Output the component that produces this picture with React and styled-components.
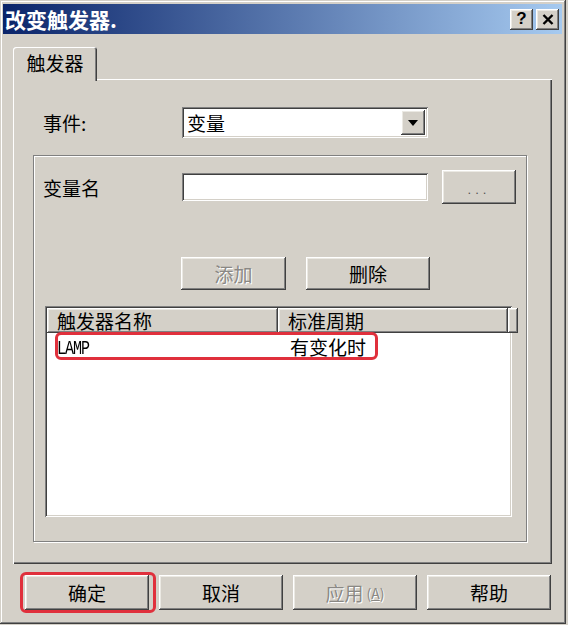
import React from "react";
import styled, { createGlobalStyle, css } from "styled-components";

const FACE = "#d4d0c8";
const CJK = `"Noto Sans CJK SC", "Liberation Sans", sans-serif`;

const raised = css`
  box-shadow: inset -1px -1px #404040, inset 1px 1px #ffffff,
    inset -2px -2px #808080, inset 2px 2px #ebe9e3;
`;

const sunken = css`
  box-shadow: inset 1px 1px #808080, inset -1px -1px #ffffff,
    inset 2px 2px #404040, inset -2px -2px #d4d0c8;
`;

const GlobalStyle = createGlobalStyle`
  html, body {
    margin: 0;
    background: ${FACE};
    font-family: ${CJK};
    color: #000;
  }
`;

const Window = styled.div`
  box-sizing: border-box;
  width: 566px;
  height: 624px;
  padding: 4px 4px 3px 3px;
  background: ${FACE};
  box-shadow: inset -1px -1px #404040, inset 1px 1px #d4d0c8,
    inset -2px -2px #808080, inset 2px 2px #ffffff;
  display: flex;
  flex-direction: column;
`;

const TitleBar = styled.div`
  height: 30px;
  display: flex;
  align-items: center;
  padding: 0 3px 0 2px;
  background: linear-gradient(to right, #0a246a, #a6caf0);
`;

const Title = styled.div`
  flex: 1;
  color: #fff;
  font-weight: bold;
  font-size: 21px;
  line-height: 1;
`;

const TitleButtons = styled.div`
  display: flex;
  gap: 3px;
`;

const TitleButton = styled.div`
  box-sizing: border-box;
  width: 23px;
  height: 21px;
  background: ${FACE};
  ${raised};
  display: flex;
  align-items: center;
  justify-content: center;
  font-family: "Liberation Sans", sans-serif;
  font-weight: bold;
  font-size: 17px;
`;

const Body = styled.div`
  flex: 1;
  display: flex;
  flex-direction: column;
  padding: 13px 10px 0 10px;
`;

const TabStrip = styled.div`
  display: flex;
  height: 32px;
  position: relative;
  z-index: 1;
`;

const Tab = styled.div`
  box-sizing: border-box;
  width: 84px;
  height: 34px;
  background: ${FACE};
  border-radius: 3px 3px 0 0;
  box-shadow: inset 1px 1px #ffffff, inset -1px 0 #404040, inset -2px 0 #808080;
  font-size: 19px;
  line-height: 1;
  padding-top: 6px;
  text-align: center;
`;

const Panel = styled.div`
  box-sizing: border-box;
  height: 485px;
  display: flex;
  flex-direction: column;
  box-shadow: inset 1px 1px #ffffff, inset -1px -1px #404040,
    inset -2px -2px #808080;
`;

const FieldRow = styled.div`
  display: flex;
  align-items: center;
  margin-top: ${(p) => p.$top}px;
  padding-left: ${(p) => p.$indent}px;
`;

const Label = styled.div`
  width: 139px;
  font-size: 19px;
  line-height: 1;
`;

const Combo = styled.div`
  box-sizing: border-box;
  width: 246px;
  height: 31px;
  background: #fff;
  ${sunken};
  display: flex;
  align-items: center;
  padding: 0 3px 0 5px;
`;

const ComboText = styled.div`
  flex: 1;
  font-size: 19px;
  line-height: 1;
`;

const DropButton = styled.div`
  box-sizing: border-box;
  width: 24px;
  height: 25px;
  background: ${FACE};
  ${raised};
  display: flex;
  align-items: center;
  justify-content: center;
`;

const GroupBox = styled.div`
  flex: 1;
  margin: 17px 25px 22px 20px;
  border: 1px solid #808080;
  box-shadow: inset 1px 1px #ffffff, 1px 1px #ffffff;
  display: flex;
  flex-direction: column;
`;

const TextField = styled.div`
  box-sizing: border-box;
  width: 246px;
  height: 28px;
  background: #fff;
  ${sunken};
`;

const Button = styled.div`
  box-sizing: border-box;
  position: relative;
  width: ${(p) => p.$w}px;
  height: ${(p) => p.$h || 33}px;
  margin-left: ${(p) => p.$ml || 0}px;
  background: ${FACE};
  ${raised};
  display: flex;
  align-items: center;
  justify-content: center;
  font-size: 19px;
  line-height: 1;
  color: ${(p) => (p.$disabled ? "#8a8884" : "#000")};
  text-shadow: ${(p) => (p.$disabled ? "1px 1px #ffffff" : "none")};

  ${(p) =>
    p.$marked &&
    css`
      &::after {
        content: "";
        position: absolute;
        top: -3px;
        left: -5px;
        right: -7px;
        bottom: -3px;
        border: 3px solid #e0303c;
        border-radius: 6px;
      }
    `}
`;

const Dots = styled.span`
  font-family: "Liberation Sans", sans-serif;
  font-size: 13px;
  letter-spacing: 4px;
  color: #555;
  margin-top: 4px;
`;

const Mnemonic = styled.span`
  font-size: 14px;
  margin-left: 3px;
`;

const ActionRow = styled.div`
  display: flex;
  gap: 20px;
  margin-top: 53px;
  padding-left: 147px;
`;

const List = styled.div`
  flex: 1;
  margin: 16px 14px 24px 11px;
  padding: 2px;
  background: #fff;
  ${sunken};
  display: flex;
  flex-direction: column;
`;

const Header = styled.div`
  display: flex;
  height: 25px;
`;

const HeaderCell = styled.div`
  box-sizing: border-box;
  width: ${(p) => p.$w}px;
  flex: ${(p) => (p.$w ? "none" : 1)};
  background: ${FACE};
  ${raised};
  padding-left: 10px;
  display: flex;
  align-items: center;
  font-size: 19px;
  line-height: 1;
`;

const Row = styled.div`
  position: relative;
  display: flex;
  height: 24px;
  margin-top: 1px;
  align-items: center;

  ${(p) =>
    p.$marked &&
    css`
      &::after {
        content: "";
        position: absolute;
        left: 8px;
        top: -2px;
        width: 323px;
        height: 28px;
        box-sizing: border-box;
        border: 3px solid #e0303c;
        border-radius: 6px;
      }
    `}
`;

const Cell = styled.div`
  box-sizing: border-box;
  width: ${(p) => p.$w}px;
  padding-left: ${(p) => p.$pad}px;
  font-size: 19px;
  line-height: 1;
`;

const MonoText = styled.span`
  font-family: "Liberation Mono", monospace;
  font-size: 15px;
  letter-spacing: -1px;
  transform: scaleY(1.3);
  display: inline-block;
`;

const Footer = styled.div`
  display: flex;
  gap: 10px;
  padding: 11px 0 0 12px;
`;

export default function App() {
  return (
    <>
      <GlobalStyle />
      <Window>
        <TitleBar>
          <Title>改变触发器.</Title>
          <TitleButtons>
            <TitleButton>?</TitleButton>
            <TitleButton>
              <svg width="12" height="11" viewBox="0 0 12 11">
                <path d="M1.5 1 L10.5 10 M10.5 1 L1.5 10" stroke="#000" strokeWidth="2.4" />
              </svg>
            </TitleButton>
          </TitleButtons>
        </TitleBar>

        <Body>
          <TabStrip>
            <Tab>触发器</Tab>
          </TabStrip>
          <Panel>
            <FieldRow $top={28} $indent={30}>
              <Label>事件:</Label>
              <Combo>
                <ComboText>变量</ComboText>
                <DropButton>
                  <svg width="10" height="6" viewBox="0 0 10 6">
                    <path d="M0 0 H10 L5 6 Z" fill="#000" />
                  </svg>
                </DropButton>
              </Combo>
            </FieldRow>

            <GroupBox>
              <FieldRow $top={14} $indent={9}>
                <Label>变量名</Label>
                <TextField />
                <Button $w={74} $h={34} $ml={14}>
                  <Dots>...</Dots>
                </Button>
              </FieldRow>

              <ActionRow>
                <Button $w={105} $disabled>添加</Button>
                <Button $w={124}>删除</Button>
              </ActionRow>

              <List>
                <Header>
                  <HeaderCell $w={231}>触发器名称</HeaderCell>
                  <HeaderCell $w={230}>标准周期</HeaderCell>
                  <HeaderCell />
                </Header>
                <Row $marked>
                  <Cell $w={231} $pad={10}>
                    <MonoText>LAMP</MonoText>
                  </Cell>
                  <Cell $w={230} $pad={12}>有变化时</Cell>
                </Row>
              </List>
            </GroupBox>
          </Panel>

          <Footer>
            <Button $w={124} $h={35} $marked>确定</Button>
            <Button $w={124} $h={35}>取消</Button>
            <Button $w={124} $h={35} $disabled>
              应用<Mnemonic>(<u>A</u>)</Mnemonic>
            </Button>
            <Button $w={124} $h={35}>帮助</Button>
          </Footer>
        </Body>
      </Window>
    </>
  );
}
